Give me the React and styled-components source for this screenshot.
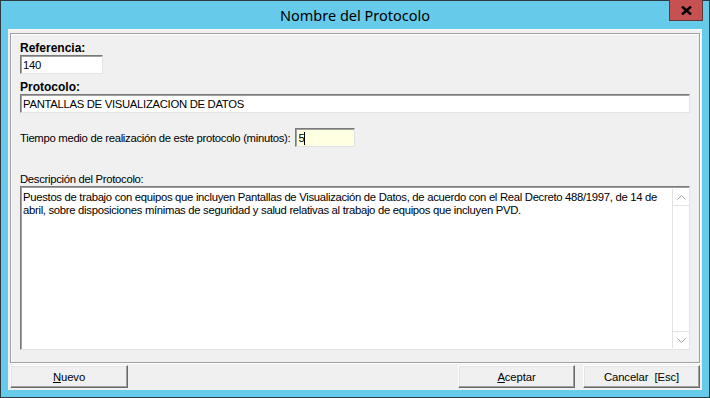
import React from "react";
import styled, { createGlobalStyle } from "styled-components";

const GlobalStyle = createGlobalStyle`
  html, body {
    margin: 0;
    padding: 0;
    width: 710px;
    height: 398px;
    overflow: hidden;
    background: #ffffff;
  }
  * {
    box-sizing: border-box;
  }
`;

const Window = styled.div`
  width: 710px;
  height: 398px;
  background: #66cbea;
  border: 1px solid #2d3a40;
  padding: 0 7px 7px 7px;
  display: flex;
  flex-direction: column;
  font-family: "Liberation Sans", Arial, sans-serif;
  font-size: 11.3px;
  letter-spacing: -0.3px;
  color: #000;
`;

const TitleBar = styled.div`
  height: 29px;
  margin-top: -1px;
  display: grid;
  grid-template-columns: 1fr auto 1fr;
  align-items: start;
`;

const Title = styled.div`
  grid-column: 2;
  font-family: "Noto Sans", "Open Sans", sans-serif;
  font-size: 14.5px;
  letter-spacing: 0;
  line-height: 30px;
  color: #000;
`;

const CloseButton = styled.div`
  grid-column: 3;
  justify-self: end;
  margin-right: -1px;
  width: 34px;
  height: 21px;
  background: #c75050;
  border: 1px solid #5a3a3a;
  border-top: none;
  display: flex;
  align-items: center;
  justify-content: center;
`;

const Client = styled.div`
  flex: 1;
  background: #f0f0f0;
  border-top: 1px solid #f8f8f8;
  padding: 3px 2px 2px 2px;
  display: flex;
  flex-direction: column;
`;

const Panel = styled.div`
  height: 330px;
  border: 1px solid #a0a0a0;
  box-shadow: 1px 1px 0 #ffffff, inset 1px 1px 0 #ffffff;
  padding: 7px 9px 9px 9px;
  display: flex;
  flex-direction: column;
`;

const Label = styled.div`
  font-weight: ${(p) => (p.bold ? "bold" : "normal")};
  font-size: ${(p) => (p.bold ? "12px" : "inherit")};
  letter-spacing: ${(p) => (p.bold ? "0" : "inherit")};
  line-height: 14px;
  height: 14px;
  margin-top: ${(p) => p.top || 0}px;
  white-space: nowrap;
`;

const Field = styled.div`
  width: ${(p) => p.width || "100%"};
  height: 19px;
  background: ${(p) => (p.yellow ? "#ffffe1" : "#ffffff")};
  border: 1px solid;
  border-color: #7a7a7a #e3e3e3 #e3e3e3 #7a7a7a;
  box-shadow: inset 1px 1px 0 #a0a0a0;
  padding: 1px 0 0 2px;
  line-height: 15px;
  white-space: nowrap;
  display: flex;
  align-items: center;
`;

const Caret = styled.span`
  display: inline-block;
  width: 1px;
  height: 13px;
  background: #000;
`;

const TimeRow = styled.div`
  margin-top: 15px;
  display: flex;
  align-items: center;
  gap: 5px;
`;

const TextArea = styled.div`
  height: 164px;
  width: 100%;
  background: #ffffff;
  border: 1px solid;
  border-color: #7a7a7a #e3e3e3 #e3e3e3 #7a7a7a;
  box-shadow: inset 1px 1px 0 #a0a0a0;
  display: flex;
  padding: 2px 0 1px 2px;
`;

const AreaText = styled.div`
  flex: 1;
  line-height: 13px;
  padding-top: 2px;
  padding-right: 8px;
`;

const ScrollBar = styled.div`
  width: 17px;
  display: flex;
  flex-direction: column;
  border-left: 1px solid #e3e3e3;
`;

const ScrollArrow = styled.div`
  height: 17px;
  display: flex;
  align-items: center;
  justify-content: center;
  border-bottom: ${(p) => (p.down ? "none" : "1px solid #e3e3e3")};
  border-top: ${(p) => (p.down ? "1px solid #e3e3e3" : "none")};
`;

const ScrollTrack = styled.div`
  flex: 1;
`;

const Footer = styled.div`
  margin-top: 2px;
  display: flex;
  align-items: center;
  height: 23px;
`;

const Button = styled.div`
  width: ${(p) => p.width || 118}px;
  height: 23px;
  margin-left: ${(p) => p.gap || 0}px;
  background: #f0f0f0;
  border: 1px solid;
  border-color: #ffffff #696969 #696969 #ffffff;
  box-shadow: inset -1px -1px 0 #a0a0a0, inset 1px 1px 0 #e3e3e3;
  display: flex;
  align-items: center;
  justify-content: center;
  line-height: 14px;
  letter-spacing: -0.1px;
  white-space: pre;
`;

const Spacer = styled.div`
  flex: 1;
`;

const Chevron = ({ down }) => (
  <svg width="9" height="5" viewBox="0 0 9 5">
    <path
      d={down ? "M0.5 0.5 L4.5 4.5 L8.5 0.5" : "M0.5 4.5 L4.5 0.5 L8.5 4.5"}
      fill="none"
      stroke="#a0a0a0"
      strokeWidth="1"
    />
  </svg>
);

export default function App() {
  return (
    <>
      <GlobalStyle />
      <Window>
        <TitleBar>
          <Title>Nombre del Protocolo</Title>
          <CloseButton>
            <svg width="11" height="9" viewBox="0 0 11 9">
              <path d="M1 0.5 L10 8.5 M10 0.5 L1 8.5" stroke="#000" strokeWidth="2.4" />
            </svg>
          </CloseButton>
        </TitleBar>
        <Client>
          <Panel>
            <Label bold>Referencia:</Label>
            <Field width="83px">140</Field>
            <Label bold top={6}>Protocolo:</Label>
            <Field>PANTALLAS DE VISUALIZACION DE DATOS</Field>
            <TimeRow>
              <Label>Tiempo medio de realización de este protocolo (minutos):</Label>
              <Field width="60px" yellow>
                5<Caret />
              </Field>
            </TimeRow>
            <Label top={25}>Descripción del Protocolo:</Label>
            <TextArea>
              <AreaText>
                Puestos de trabajo con equipos que incluyen Pantallas de Visualización de Datos, de acuerdo con el Real Decreto 488/1997, de 14 de abril, sobre disposiciones mínimas de seguridad y salud relativas al trabajo de equipos que incluyen PVD.
              </AreaText>
              <ScrollBar>
                <ScrollArrow>
                  <Chevron />
                </ScrollArrow>
                <ScrollTrack />
                <ScrollArrow down>
                  <Chevron down />
                </ScrollArrow>
              </ScrollBar>
            </TextArea>
          </Panel>
          <Footer>
            <Button>
              <span>
                <u>N</u>uevo
              </span>
            </Button>
            <Spacer />
            <Button width={117}>
              <span>
                <u>A</u>ceptar
              </span>
            </Button>
            <Button width={117} gap={8}>
              {"Cancelar  [Esc]"}
            </Button>
          </Footer>
        </Client>
      </Window>
    </>
  );
}
